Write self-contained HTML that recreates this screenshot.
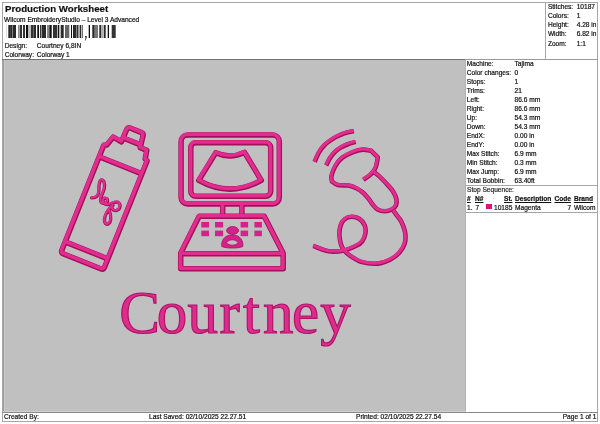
<!DOCTYPE html>
<html><head><meta charset="utf-8">
<style>
html,body{margin:0;padding:0;width:600px;height:424px;overflow:hidden;background:#fff;}
body{position:relative;font-family:"Liberation Sans",sans-serif;color:#111;}
#wrap{position:absolute;left:0;top:0;width:600px;height:424px;will-change:transform;}
.t,#title{-webkit-text-stroke:0.2px #111;}
.t{position:absolute;white-space:pre;font-size:6.6px;line-height:9px;}
.ln{position:absolute;background:#a6a6a6;}
#title{position:absolute;left:5px;top:2.5px;font-weight:bold;font-size:9.7px;line-height:12px;white-space:pre;color:#111;}
svg{position:absolute;left:0;top:0;}
</style></head><body>
<div id="wrap">
<!-- frame -->
<div class="ln" style="left:2px;top:2px;width:596px;height:1px;"></div>
<div class="ln" style="left:2px;top:2px;width:1px;height:420px;"></div>
<div class="ln" style="left:597px;top:2px;width:1px;height:420px;"></div>
<div class="ln" style="left:2px;top:421px;width:596px;height:1px;"></div>
<div class="ln" style="left:545px;top:2px;width:1px;height:57px;"></div>
<div class="ln" style="left:2px;top:59px;width:463px;height:1px;background:#727272;"></div><div class="ln" style="left:465px;top:59px;width:133px;height:1px;background:#9a9a9a;"></div>
<div class="ln" style="left:2px;top:412px;width:596px;height:1px;background:#888;"></div>
<!-- gray design area -->
<div style="position:absolute;left:3px;top:60px;width:462px;height:351px;background:#c0c0c0;"></div><div style="position:absolute;left:465px;top:60px;width:1px;height:351px;background:#b2b2b2;"></div><div style="position:absolute;left:3px;top:411px;width:463px;height:1px;background:#d2d2d2;"></div><div style="position:absolute;left:3px;top:60px;width:1px;height:351px;background:#9c9c9c;"></div><div style="position:absolute;left:4px;top:60px;width:1px;height:351px;background:#c9c9c9;"></div>

<div id="title">Production Worksheet</div>
<div class="t" style="left:4px;top:15px;">Wilcom EmbroideryStudio – Level 3 Advanced</div>
<!-- barcode -->
<svg width="600" height="60" style="left:0;top:0">
<g><rect x="6.1" y="25" width="0.5" height="13" fill="#bbb"/><rect x="8.3" y="25" width="4.0" height="13" fill="#2a2a2a"/><rect x="10.0" y="25" width="0.5" height="13" fill="#555"/><rect x="12.6" y="25" width="3.4" height="13" fill="#2a2a2a"/><rect x="18" y="25" width="1.7" height="13" fill="#888"/><rect x="20" y="25" width="2" height="13" fill="#333"/><rect x="23" y="25" width="2" height="13" fill="#333"/><rect x="26" y="25" width="2" height="13" fill="#111"/><rect x="28" y="25" width="2" height="13" fill="#bbb"/><rect x="30.7" y="25" width="2.3" height="13" fill="#333"/><rect x="33.3" y="25" width="2.7" height="13" fill="#2a2a2a"/><rect x="37.3" y="25" width="1.7" height="13" fill="#111"/><rect x="40" y="25" width="1" height="13" fill="#333"/><rect x="41" y="25" width="1" height="13" fill="#999"/><rect x="42" y="25" width="4" height="13" fill="#2a2a2a"/><rect x="47" y="25" width="2" height="13" fill="#888"/><rect x="49.3" y="25" width="2.4" height="13" fill="#111"/><rect x="53" y="25" width="4" height="13" fill="#333"/><rect x="57.7" y="25" width="1.3" height="13" fill="#111"/><rect x="59" y="25" width="2" height="13" fill="#bbb"/><rect x="61" y="25" width="2.7" height="13" fill="#2a2a2a"/><rect x="65" y="25" width="4.3" height="13" fill="#666"/><rect x="71" y="25" width="1" height="13" fill="#111"/><rect x="73" y="25" width="3" height="13" fill="#2a2a2a"/><rect x="76" y="25" width="1" height="13" fill="#888"/><rect x="77" y="25" width="1.3" height="13" fill="#333"/><rect x="79.7" y="25" width="1.3" height="13" fill="#2a2a2a"/><rect x="78" y="25" width="1.5" height="13" fill="#999"/><rect x="81.7" y="25" width="1.0" height="13" fill="#333"/><rect x="88.7" y="25" width="1.3" height="13" fill="#111"/><rect x="92.3" y="25" width="2.4" height="13" fill="#2a2a2a"/><rect x="95" y="25" width="3" height="13" fill="#777"/><rect x="99.3" y="25" width="2.0" height="13" fill="#2a2a2a"/><rect x="101.3" y="25" width="1.7" height="13" fill="#aaa"/><rect x="103.7" y="25" width="2.0" height="13" fill="#2a2a2a"/><rect x="107.7" y="25" width="1.3" height="13" fill="#111"/><rect x="111.7" y="25" width="4.0" height="13" fill="#333"/><path d="M85.2 36 h1.5 v1.6 l-1 3 h-0.6 l0.5-3 h-0.4z" fill="#222"/></g>
</svg>
<div class="t" style="left:4.7px;top:40.8px;">Design:</div>
<div class="t" style="left:36.8px;top:40.8px;">Courtney 6,8IN</div>
<div class="t" style="left:4.7px;top:49.8px;">Colorway:</div>
<div class="t" style="left:36.8px;top:49.8px;">Colorway 1</div>

<!-- stats -->
<div class="t" style="left:547.9px;top:2.1px;">Stitches:</div><div class="t" style="left:576.7px;top:2.1px;">10187</div>
<div class="t" style="left:547.9px;top:11.2px;">Colors:</div><div class="t" style="left:576.7px;top:11.2px;">1</div>
<div class="t" style="left:547.9px;top:20.3px;">Height:</div><div class="t" style="left:576.7px;top:20.3px;">4.28 in</div>
<div class="t" style="left:547.9px;top:29.4px;">Width:</div><div class="t" style="left:576.7px;top:29.4px;">6.82 in</div>
<div class="t" style="left:547.9px;top:38.5px;">Zoom:</div><div class="t" style="left:576.7px;top:38.5px;">1:1</div>

<!-- right panel -->
<div id="rp" style="position:absolute;left:0;top:0;">
<div class="t" style="left:466.8px;top:59.35px;">Machine:</div><div class="t" style="left:514.5px;top:59.35px;">Tajima</div>
<div class="t" style="left:466.8px;top:68.35px;">Color changes:</div><div class="t" style="left:514.5px;top:68.35px;">0</div>
<div class="t" style="left:466.8px;top:77.35px;">Stops:</div><div class="t" style="left:514.5px;top:77.35px;">1</div>
<div class="t" style="left:466.8px;top:86.35px;">Trims:</div><div class="t" style="left:514.5px;top:86.35px;">21</div>
<div class="t" style="left:466.8px;top:95.35px;">Left:</div><div class="t" style="left:514.5px;top:95.35px;">86.6 mm</div>
<div class="t" style="left:466.8px;top:104.35px;">Right:</div><div class="t" style="left:514.5px;top:104.35px;">86.6 mm</div>
<div class="t" style="left:466.8px;top:113.35px;">Up:</div><div class="t" style="left:514.5px;top:113.35px;">54.3 mm</div>
<div class="t" style="left:466.8px;top:122.35px;">Down:</div><div class="t" style="left:514.5px;top:122.35px;">54.3 mm</div>
<div class="t" style="left:466.8px;top:131.35px;">EndX:</div><div class="t" style="left:514.5px;top:131.35px;">0.00 in</div>
<div class="t" style="left:466.8px;top:140.35px;">EndY:</div><div class="t" style="left:514.5px;top:140.35px;">0.00 in</div>
<div class="t" style="left:466.8px;top:149.35px;">Max Stitch:</div><div class="t" style="left:514.5px;top:149.35px;">6.9 mm</div>
<div class="t" style="left:466.8px;top:158.35px;">Min Stitch:</div><div class="t" style="left:514.5px;top:158.35px;">0.3 mm</div>
<div class="t" style="left:466.8px;top:167.35px;">Max Jump:</div><div class="t" style="left:514.5px;top:167.35px;">6.9 mm</div>
<div class="t" style="left:466.8px;top:176.35px;">Total Bobbin:</div><div class="t" style="left:514.5px;top:176.35px;">63.40ft</div>
</div>
<div class="ln" style="left:466px;top:185px;width:131px;height:1px;"></div>
<div class="t" style="left:467px;top:185.2px;color:#333;">Stop Sequence:</div>
<div class="t" style="left:467px;top:194.3px;font-weight:bold;text-decoration:underline;">#</div>
<div class="t" style="left:475px;top:194.3px;font-weight:bold;text-decoration:underline;">N#</div>
<div class="t" style="left:504px;top:194.3px;font-weight:bold;text-decoration:underline;">St.</div>
<div class="t" style="left:515px;top:194.3px;font-weight:bold;text-decoration:underline;">Description</div>
<div class="t" style="left:554.5px;top:194.3px;font-weight:bold;text-decoration:underline;">Code</div>
<div class="t" style="left:573.9px;top:194.3px;font-weight:bold;text-decoration:underline;">Brand</div>
<div class="t" style="left:467px;top:203px;">1.</div>
<div class="t" style="left:475.4px;top:203px;">7</div>
<div style="position:absolute;left:486px;top:204.4px;width:5.7px;height:4.5px;background:#d8157f;"></div>
<div class="t" style="left:494px;top:203px;">10185</div>
<div class="t" style="left:515px;top:203px;">Magenta</div>
<div class="t" style="left:567.5px;top:203px;">7</div>
<div class="t" style="left:573.9px;top:203px;">Wilcom</div>
<div class="ln" style="left:466px;top:212px;width:131px;height:1px;"></div>

<!-- footer -->
<div class="t" style="left:4px;top:412.2px;">Created By:</div>
<div class="t" style="left:149px;top:412.2px;">Last Saved: 02/10/2025 22.27.51</div>
<div class="t" style="left:356px;top:412.2px;">Printed: 02/10/2025 22.27.54</div>
<div class="t" style="left:562.7px;top:412.2px;">Page 1 of 1</div>

<!-- design -->
<svg width="600" height="424" viewBox="0 0 600 424">

<g fill="none" stroke-linecap="butt" stroke-linejoin="round" stroke="#a30f5a" stroke-width="5.5" transform="translate(0.2 0.35)">
  <!-- bottle -->
  <g transform="translate(103.7 206.6) rotate(21.8)">
    <path d="M-23 -57.3 L-20.3 -58.6 L-17.2 -68.4 L-7.9 -67 L-7.6 -80 Q-7.4 -83 -4.4 -83 L6.8 -83 Q9.8 -83 10 -80 L11.8 -68.5 L18.8 -68.5 L20.5 -60 L23 -58.8 L23 55.5 Q23 58.6 19.9 58.6 L-19.9 58.6 Q-23 58.6 -23 55.5 Z"/>
    <path d="M-7.8 -71.2 L11 -71.2"/>
    <path d="M-23 -44.8 L23 -44.8"/>
    <path d="M-23 46.8 L23 46.8"/>
  </g>

  <!-- monitor -->
  <rect x="180.9" y="134.6" width="98.2" height="69" rx="6.5"/>
  <rect x="190.6" y="142.3" width="79.9" height="53.7" rx="5"/>
  <path d="M215.5 152.5 Q230 159 244.3 152 L261.1 180 Q229.8 197.5 198.6 180 Z"/>
  <path d="M222.5 205 V214 M241.7 205 V214"/>
  <path d="M199 216 H264 L283 253 V268.5 H180.5 V253 Z M180.5 253.5 H283"/>
</g>
<g fill="none" stroke-linecap="butt" stroke-linejoin="round" stroke="#e22d90" stroke-width="3.6" transform="translate(-0.1 -0.3)">
  <!-- bottle -->
  <g transform="translate(103.7 206.6) rotate(21.8)">
    <path d="M-23 -57.3 L-20.3 -58.6 L-17.2 -68.4 L-7.9 -67 L-7.6 -80 Q-7.4 -83 -4.4 -83 L6.8 -83 Q9.8 -83 10 -80 L11.8 -68.5 L18.8 -68.5 L20.5 -60 L23 -58.8 L23 55.5 Q23 58.6 19.9 58.6 L-19.9 58.6 Q-23 58.6 -23 55.5 Z"/>
    <path d="M-7.8 -71.2 L11 -71.2"/>
    <path d="M-23 -44.8 L23 -44.8"/>
    <path d="M-23 46.8 L23 46.8"/>
  </g>

  <!-- monitor -->
  <rect x="180.9" y="134.6" width="98.2" height="69" rx="6.5"/>
  <rect x="190.6" y="142.3" width="79.9" height="53.7" rx="5"/>
  <path d="M215.5 152.5 Q230 159 244.3 152 L261.1 180 Q229.8 197.5 198.6 180 Z"/>
  <path d="M222.5 205 V214 M241.7 205 V214"/>
  <path d="M199 216 H264 L283 253 V268.5 H180.5 V253 Z M180.5 253.5 H283"/>
</g>
<g fill="none" stroke-linecap="butt" stroke-linejoin="round" stroke="#a30f5a" stroke-width="4.6" transform="translate(0.2 0.3)">
  <!-- probe -->
  <path d="M314.4 161.6 C315.1 160.1 316.9 155.3 318.5 152.5 C320.1 149.7 321.4 147.5 324.2 144.9 C326.9 142.3 331.7 139.1 335.0 137.1 C338.3 135.1 340.9 134.1 344.0 133.0 C347.1 131.9 352.0 131.2 353.6 130.8"/>
  <path d="M326.0 165.0 C326.7 163.8 328.5 159.8 330.0 157.5 C331.5 155.2 333.3 153.0 335.0 151.3 C336.7 149.7 338.0 148.8 340.0 147.6 C342.0 146.4 344.4 145.2 347.0 144.2 C349.6 143.2 354.1 142.0 355.5 141.6"/>
  <path d="M363.2 179.5 C364.4 178.6 368.4 176.1 370.3 174.3 C372.2 172.5 373.8 170.6 374.9 168.5 C376.0 166.4 376.4 163.9 376.8 162.0 C377.2 160.1 377.4 157.7 377.5 156.8 L371 150.6 C369.6 150.4 365.7 149.1 362.6 149.3 C359.5 149.5 355.7 150.6 352.2 152.0 C348.7 153.4 344.7 155.3 341.8 157.6 C338.9 159.9 336.8 162.9 335.0 166.0 C333.2 169.1 331.7 173.5 331.2 176.0 C330.7 178.5 331.7 180.3 331.8 181.2 C332.8 181.8 334.8 183.9 337.5 184.6 C340.2 185.3 345.2 184.8 348.3 185.3 C351.4 185.9 353.8 186.8 356.1 187.9 C358.4 189.0 360.1 190.1 362.1 191.8 C364.1 193.5 366.2 195.9 368.0 198.0 C369.8 200.1 371.1 202.6 372.7 204.5 C374.3 206.4 375.4 208.1 377.4 209.2 C379.4 210.3 382.1 211.0 384.5 211.0 C386.9 211.0 389.7 210.2 391.6 209.2 C393.5 208.2 394.9 206.8 395.7 205.1 C396.5 203.4 396.8 201.6 396.3 199.2 C395.8 196.8 394.5 193.7 392.7 190.9 C390.9 188.2 388.0 185.2 385.7 182.7 C383.4 180.1 380.6 177.4 378.6 175.6 C376.6 173.8 374.4 172.3 373.6 171.7"/>
  <path d="M393.3 210.5 C393.9 211.3 395.6 213.6 397.0 215.5 C398.4 217.4 400.1 219.1 401.4 221.9 C402.7 224.8 404.5 229.0 405.0 232.6 C405.5 236.2 405.5 240.0 404.5 243.3 C403.5 246.6 401.5 249.8 399.1 252.5 C396.7 255.2 393.5 257.6 389.9 259.4 C386.3 261.2 382.3 262.9 377.7 263.3 C373.1 263.7 366.5 263.1 362.0 261.8 C357.5 260.6 353.8 258.1 350.5 255.8 C347.2 253.5 344.4 251.3 342.5 248.0 C340.6 244.7 339.6 239.8 339.3 236.0 C339.0 232.2 339.6 227.8 340.5 225.0 C341.4 222.2 342.7 220.4 344.5 219.0 C346.3 217.6 349.0 216.6 351.4 216.5 C353.8 216.4 356.8 217.1 359.0 218.5 C361.2 219.9 363.5 222.6 364.5 225.0 C365.5 227.4 365.6 230.3 365.2 233.0 C364.8 235.7 363.5 238.9 362.0 241.0 C360.5 243.1 359.1 244.0 356.0 245.5 C352.9 247.0 348.3 249.3 343.7 250.2 C339.1 251.1 333.5 251.8 328.4 251.0 C323.3 250.2 315.7 246.5 313.1 245.6"/>
</g>
<g fill="none" stroke-linecap="butt" stroke-linejoin="round" stroke="#e22d90" stroke-width="3" transform="translate(-0.1 -0.25)">
  <!-- probe -->
  <path d="M314.4 161.6 C315.1 160.1 316.9 155.3 318.5 152.5 C320.1 149.7 321.4 147.5 324.2 144.9 C326.9 142.3 331.7 139.1 335.0 137.1 C338.3 135.1 340.9 134.1 344.0 133.0 C347.1 131.9 352.0 131.2 353.6 130.8"/>
  <path d="M326.0 165.0 C326.7 163.8 328.5 159.8 330.0 157.5 C331.5 155.2 333.3 153.0 335.0 151.3 C336.7 149.7 338.0 148.8 340.0 147.6 C342.0 146.4 344.4 145.2 347.0 144.2 C349.6 143.2 354.1 142.0 355.5 141.6"/>
  <path d="M363.2 179.5 C364.4 178.6 368.4 176.1 370.3 174.3 C372.2 172.5 373.8 170.6 374.9 168.5 C376.0 166.4 376.4 163.9 376.8 162.0 C377.2 160.1 377.4 157.7 377.5 156.8 L371 150.6 C369.6 150.4 365.7 149.1 362.6 149.3 C359.5 149.5 355.7 150.6 352.2 152.0 C348.7 153.4 344.7 155.3 341.8 157.6 C338.9 159.9 336.8 162.9 335.0 166.0 C333.2 169.1 331.7 173.5 331.2 176.0 C330.7 178.5 331.7 180.3 331.8 181.2 C332.8 181.8 334.8 183.9 337.5 184.6 C340.2 185.3 345.2 184.8 348.3 185.3 C351.4 185.9 353.8 186.8 356.1 187.9 C358.4 189.0 360.1 190.1 362.1 191.8 C364.1 193.5 366.2 195.9 368.0 198.0 C369.8 200.1 371.1 202.6 372.7 204.5 C374.3 206.4 375.4 208.1 377.4 209.2 C379.4 210.3 382.1 211.0 384.5 211.0 C386.9 211.0 389.7 210.2 391.6 209.2 C393.5 208.2 394.9 206.8 395.7 205.1 C396.5 203.4 396.8 201.6 396.3 199.2 C395.8 196.8 394.5 193.7 392.7 190.9 C390.9 188.2 388.0 185.2 385.7 182.7 C383.4 180.1 380.6 177.4 378.6 175.6 C376.6 173.8 374.4 172.3 373.6 171.7"/>
  <path d="M393.3 210.5 C393.9 211.3 395.6 213.6 397.0 215.5 C398.4 217.4 400.1 219.1 401.4 221.9 C402.7 224.8 404.5 229.0 405.0 232.6 C405.5 236.2 405.5 240.0 404.5 243.3 C403.5 246.6 401.5 249.8 399.1 252.5 C396.7 255.2 393.5 257.6 389.9 259.4 C386.3 261.2 382.3 262.9 377.7 263.3 C373.1 263.7 366.5 263.1 362.0 261.8 C357.5 260.6 353.8 258.1 350.5 255.8 C347.2 253.5 344.4 251.3 342.5 248.0 C340.6 244.7 339.6 239.8 339.3 236.0 C339.0 232.2 339.6 227.8 340.5 225.0 C341.4 222.2 342.7 220.4 344.5 219.0 C346.3 217.6 349.0 216.6 351.4 216.5 C353.8 216.4 356.8 217.1 359.0 218.5 C361.2 219.9 363.5 222.6 364.5 225.0 C365.5 227.4 365.6 230.3 365.2 233.0 C364.8 235.7 363.5 238.9 362.0 241.0 C360.5 243.1 359.1 244.0 356.0 245.5 C352.9 247.0 348.3 249.3 343.7 250.2 C339.1 251.1 333.5 251.8 328.4 251.0 C323.3 250.2 315.7 246.5 313.1 245.6"/>
</g>
<g fill="none" stroke-linecap="round" stroke-linejoin="round"><g stroke="#a30f5a" stroke-width="3.3" transform="translate(0.15 0.25)"><path d="M91.4 197.6 C94.5 197.8 97.8 196.5 98.6 192 C99.2 187.5 98 182 100.8 179.9 C103.8 178.8 104.9 183.5 104.2 188 C103.5 192.5 99.6 197 100.5 201 C101.8 204.2 106.8 203.8 107.4 200.6 C107.7 197.5 103.6 197 102.9 200 C102.6 203 106 205 109 204.2 C112 203.4 115 201 118 202 C121 204 120.5 209 116.5 210.2 C112.8 211 110.3 207.8 112.8 205 C110.8 207 108.8 208.5 107 211.5 C104.8 215.5 103.2 220 105.2 223.2 C107.2 225.2 110.2 223.2 110.6 219 C111 214.5 109.8 211.5 108.6 209"/></g><g stroke="#e22d90" stroke-width="2" transform="translate(-0.1 -0.2)"><path d="M91.4 197.6 C94.5 197.8 97.8 196.5 98.6 192 C99.2 187.5 98 182 100.8 179.9 C103.8 178.8 104.9 183.5 104.2 188 C103.5 192.5 99.6 197 100.5 201 C101.8 204.2 106.8 203.8 107.4 200.6 C107.7 197.5 103.6 197 102.9 200 C102.6 203 106 205 109 204.2 C112 203.4 115 201 118 202 C121 204 120.5 209 116.5 210.2 C112.8 211 110.3 207.8 112.8 205 C110.8 207 108.8 208.5 107 211.5 C104.8 215.5 103.2 220 105.2 223.2 C107.2 225.2 110.2 223.2 110.6 219 C111 214.5 109.8 211.5 108.6 209"/></g></g>
<g fill="#d6218a">
  <rect x="201.3" y="222" width="7.7" height="5.5"/>
  <rect x="215" y="222" width="8.1" height="5.5"/>
  <rect x="240.6" y="222" width="7.5" height="5.5"/>
  <rect x="254.4" y="222" width="7.5" height="5.5"/>
  <rect x="201.3" y="230.6" width="7.7" height="5.6"/>
  <rect x="215" y="230.6" width="8.1" height="5.6"/>
  <rect x="240.6" y="230.6" width="7.5" height="5.6"/>
  <rect x="254.4" y="230.6" width="7.5" height="5.6"/>
  <ellipse cx="232.6" cy="230.5" rx="6" ry="3.9" stroke="#a3115d" stroke-width="0.8"/>
  <path fill-rule="evenodd" stroke="#a3115d" stroke-width="0.8" d="M221.8 246.5 C221 241 224 235 232.3 234.9 C240.5 235 243.6 241 242.8 246.5 C238 248.6 226.6 248.6 221.8 246.5 Z M226.6 242.8 C228.6 238.8 236 238.8 238.2 242.8 C236 245.9 228.6 245.9 226.6 242.8 Z"/>
</g>
<text x="119.2 156.8 187.6 219.4 243.1 263 292 320.3" y="333" font-family="Liberation Serif" font-size="61" fill="#dd2c8c" stroke="#b0136a" stroke-width="1.2">Courtney</text>
</svg>
</div>
</body></html>
